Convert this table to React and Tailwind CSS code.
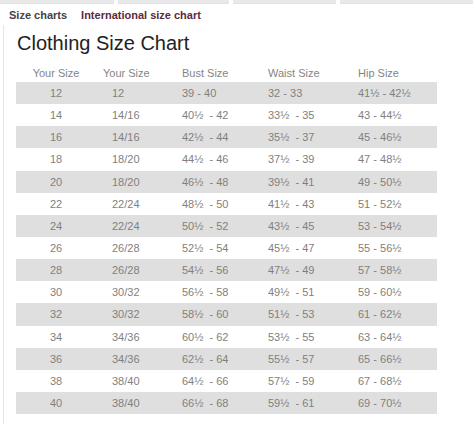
const rows = [
  ['12', '12', '39 - 40', '32 - 33', '41½ - 42½'],
  ['14', '14/16', '40½  - 42', '33½  - 35', '43 - 44½'],
  ['16', '14/16', '42½  - 44', '35½  - 37', '45 - 46½'],
  ['18', '18/20', '44½  - 46', '37½  - 39', '47 - 48½'],
  ['20', '18/20', '46½  - 48', '39½  - 41', '49 - 50½'],
  ['22', '22/24', '48½  - 50', '41½  - 43', '51 - 52½'],
  ['24', '22/24', '50½  - 52', '43½  - 45', '53 - 54½'],
  ['26', '26/28', '52½  - 54', '45½  - 47', '55 - 56½'],
  ['28', '26/28', '54½  - 56', '47½  - 49', '57 - 58½'],
  ['30', '30/32', '56½  - 58', '49½  - 51', '59 - 60½'],
  ['32', '30/32', '58½  - 60', '51½  - 53', '61 - 62½'],
  ['34', '34/36', '60½  - 62', '53½  - 55', '63 - 64½'],
  ['36', '34/36', '62½  - 64', '55½  - 57', '65 - 66½'],
  ['38', '38/40', '64½  - 66', '57½  - 59', '67 - 68½'],
  ['40', '38/40', '66½  - 68', '59½  - 61', '69 - 70½'],
];

const cols = 'grid grid-cols-[80px_78px_86px_90px_87px]';

export default function App() {
  return (
    <div className="w-[474px] h-[424px] overflow-hidden bg-white font-['Liberation_Sans',Arial,sans-serif]">
      {/* tab strip edge */}
      <div className="flex h-[4px] gap-[4px] pr-[1px]">
        <div className="w-[114px] bg-[#e9e9e9] border-b border-[#e2e2e2]" />
        <div className="w-[111px] bg-[#e9e9e9] border-b border-[#e2e2e2]" />
        <div className="w-[103px] bg-[#e9e9e9] border-b border-[#e2e2e2]" />
        <div className="flex-1 bg-[#e9e9e9] border-b border-[#e2e2e2]" />
      </div>

      <div className="flex gap-[14px] pl-[9px] pt-[5px] text-[11px] leading-[13px] font-bold">
        <span className="text-[#444]">Size charts</span>
        <span className="text-[#5c2a3d]">International size chart</span>
      </div>

      <div className="ml-[3px] mt-[3px] h-[420px] border-l border-[#e4e4e4] pt-[6px]">
        <h1 className="pl-[13px] text-[20px] leading-[24px] text-[#222]">Clothing Size Chart</h1>

        <div className="ml-[12px] mt-[7px] w-[421px] text-[11px] text-[#7f7f7f]">
          <div className={`${cols} h-[20px] pt-[2px] leading-[18px] text-[#858585]`}>
            <div className="text-center">Your Size</div>
            <div className="pl-[7px]">Your Size</div>
            <div className="pl-[8px]">Bust Size</div>
            <div className="pl-[8px]">Waist Size</div>
            <div className="pl-[8px]">Hip Size</div>
          </div>
          {rows.map((r, i) => (
            <div
              key={i}
              className={`${cols} h-[22.15px] leading-[22px] whitespace-pre ${i % 2 === 0 ? 'bg-[#dfdfdf]' : 'bg-white'}`}
            >
              <div className="text-center">{r[0]}</div>
              <div className="pl-[16px]">{r[1]}</div>
              <div className="pl-[8px]">{r[2]}</div>
              <div className="pl-[8px]">{r[3]}</div>
              <div className="pl-[8px]">{r[4]}</div>
            </div>
          ))}
        </div>
      </div>
    </div>
  );
}
